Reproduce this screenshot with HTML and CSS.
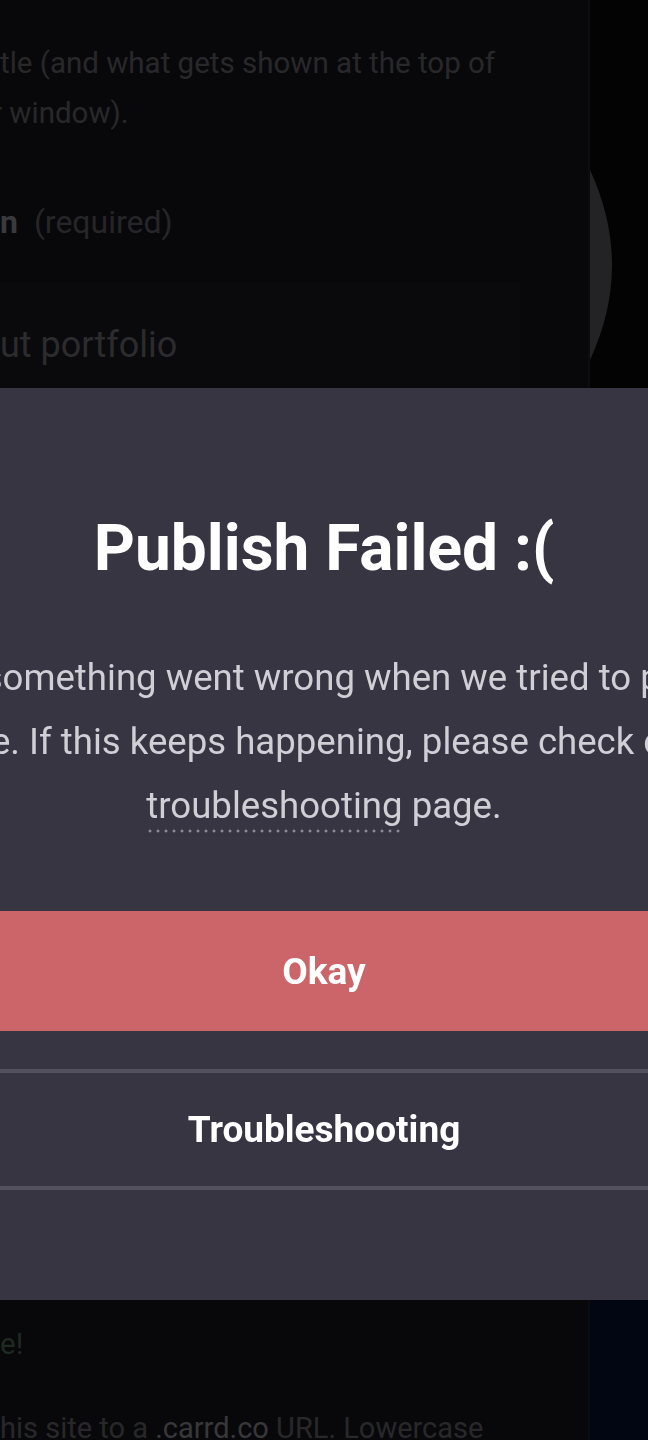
FILE: index.html
```html
<!DOCTYPE html>
<html lang="en">

<head>
    <meta charset="UTF-8">
    <meta name="viewport" content="width=device-width, initial-scale=1.0">
    <title>Publish Failed</title>
    <link rel="stylesheet" href="styles.css">
</head>

<body>

    <div class="editor">
        <section class="panel">
            <p class="hint">tle (and what gets shown at the top of<br><span class="cut">r</span> window).</p>
            <p class="field-label"><b>n</b> (required)</p>
            <div class="field-input">ut portfolio</div>

            <p class="hint hint-green">e!</p>
            <p class="hint hint-url">his site to a <span class="mono">.carrd.co</span> URL. Lowercase</p>
        </section>
        <aside class="preview">
            <div class="preview-top">
                <svg class="crescent" width="24" height="190" viewBox="0 0 24 190">
                    <path d="M0 0 Q44 95 0 190 Z" fill="#232325" />
                </svg>
            </div>
            <div class="preview-bottom"></div>
        </aside>
    </div>

    <!-- publish error modal -->
    <div class="modal">
        <h1>Publish Failed :(</h1>
        <p class="modal-text">
            Hey, sorry, something went wrong when we tried to publish your<br>
            site. If this keeps happening, please check our<br>
            <a href="#" class="dotted">troubleshooting</a> page.
        </p>
        <div class="modal-actions">
            <button class="btn btn-primary">Okay</button>
            <button class="btn btn-outline">Troubleshooting</button>
        </div>
    </div>

</body>

</html>
```

FILE: styles.css
```css
html, body {
    margin: 0;
    padding: 0;
    height: 100%;
}

body {
    font-family: Roboto, 'Noto Sans', sans-serif;
    background: #08080a;
    color: #fff;
    overflow: hidden;
}

.editor {
    display: flex;
    height: 1440px;
}

.panel {
    flex: 1;
    background: #08080a;
    padding-top: 38px;
    overflow: hidden;
}

.hint {
    margin: 0;
    font-size: 29.5px;
    line-height: 50px;
    color: #28282b;
    white-space: nowrap;
}

.cut {
    margin-left: -8px;
}

.field-label {
    margin: 65px 0 0;
    font-size: 32px;
    color: #262629;
}

.field-label b {
    color: #3a3a3d;
    margin-right: 8px;
}

.field-input {
    margin-top: 42px;
    width: 520px;
    height: 160px;
    background: #0a0a0c;
    font-size: 36px;
    line-height: 124px;
    color: #2c2c2f;
}

.hint-green {
    margin-top: 876px;
    color: #1f2a21;
}

.hint-url {
    margin-top: 34px;
    font-size: 29px;
}

.mono {
    color: #38383b;
}

.preview {
    width: 58px;
    display: flex;
    flex-direction: column;
    border-left: 2px solid #0c0c0e;
}

.preview-top {
    height: 1300px;
    background: #030304;
    padding-top: 170px;
    box-sizing: border-box;
}

.crescent {
    display: block;
}

.preview-bottom {
    flex: 1;
    background: #020512;
}

/* modal */
.modal {
    position: fixed;
    top: 388px;
    left: 0;
    right: 0;
    height: 912px;
    box-sizing: border-box;
    padding-top: 129px;
    background: #363541;
    display: flex;
    flex-direction: column;
    align-items: center;
}

.modal h1 {
    margin: 0;
    font-size: 64px;
    line-height: 64px;
    font-weight: 700;
    color: #fff;
    white-space: nowrap;
}

.modal-text {
    flex-shrink: 0;
    width: 1100px;
    margin: 65px 0 0;
    font-size: 36.6px;
    line-height: 64px;
    text-align: center;
    white-space: nowrap;
    color: #d0cfd6;
}

.dotted {
    color: inherit;
    text-decoration: none;
    padding-bottom: 6px;
    background: radial-gradient(circle, #8d8c96 1.3px, transparent 1.7px) repeat-x left bottom / 8px 4px;
}

.modal-actions {
    flex-shrink: 0;
    width: 1100px;
    margin-top: 73px;
    display: flex;
    flex-direction: column;
}

.btn {
    font-family: inherit;
    font-size: 37px;
    font-weight: 700;
    color: #fff;
    border: none;
    outline: none;
    cursor: pointer;
}

.btn-primary {
    height: 120px;
    background: #cc656a;
}

.btn-outline {
    height: 121px;
    margin-top: 38px;
    background: transparent;
    border: 4px solid #52515d;
}
```
